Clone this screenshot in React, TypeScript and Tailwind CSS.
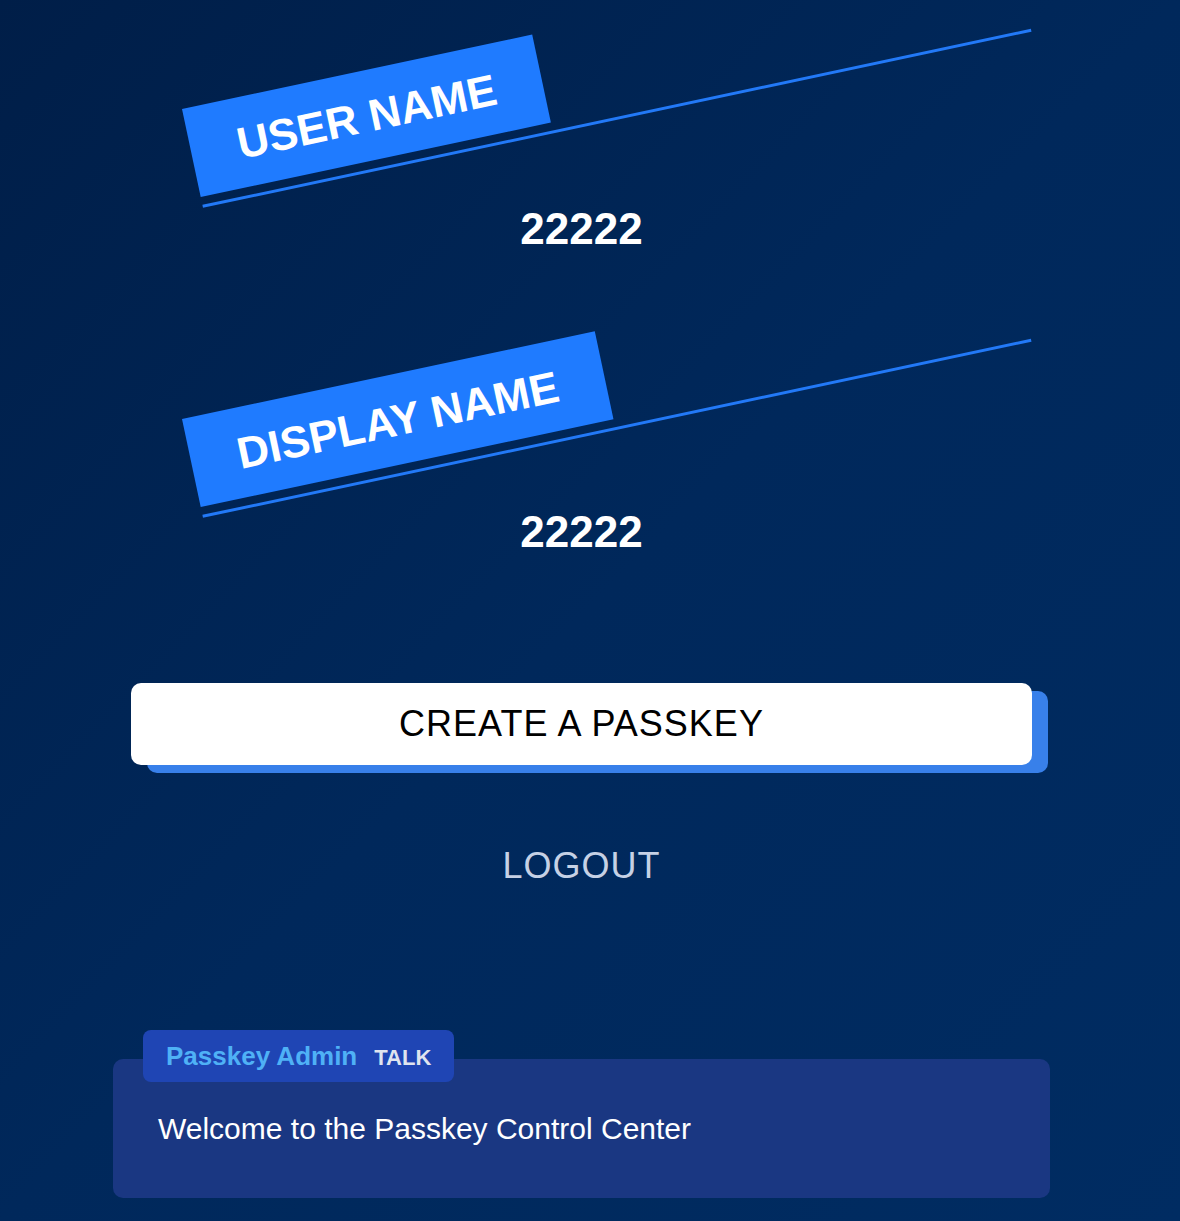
import React from 'react';

type FieldProps = {
  label: string;
  value: string;
  headClass: string;
  className?: string;
};

const Field = ({ label, value, headClass, className = '' }: FieldProps) => {
  return (
    <div className={className}>
      {/* slanted heading: label + long rule */}
      <div className={`${headClass} pl-[51px]`}>
        <div className="w-[847px] origin-top-left -rotate-12">
          <div className="w-fit h-[90px] px-[47px] flex items-center bg-[#1f7bff] text-white text-[44px] font-bold leading-[49px] whitespace-nowrap">
            {label}
          </div>
          <div className="mt-[8px] h-[3px] bg-[#2279f7]" />
        </div>
      </div>
      <div className="text-center text-white text-[44px] font-bold leading-[49px]">{value}</div>
    </div>
  );
};

const App = () => {
  return (
    <div className="min-h-screen w-full overflow-hidden bg-gradient-to-br from-[#001e48] via-[#00285b] to-[#002c62] font-['Liberation_Sans',Arial,sans-serif]">
      <div className="ml-[131px] w-[901px] pt-[109px] pb-[23px]">
        <Field label="USER NAME" value="22222" headClass="h-[95px]" />
        <Field label="DISPLAY NAME" value="22222" headClass="h-[88px]" className="mt-[166px]" />

        <button className="mt-[127px] w-full h-[82px] rounded-[10px] bg-white text-black text-[36px] leading-none tracking-[1px] shadow-[16px_8px_0_#3880ea]">
          CREATE A PASSKEY
        </button>

        <div className="mt-[81px] text-center text-[36px] leading-[40px] tracking-[1px] text-[#c6d1e5]">LOGOUT</div>

        {/* chat card */}
        <div className="mt-[144px] -mx-[18px]">
          <div className="relative z-10 ml-[30px] w-fit h-[52px] px-[23px] flex items-center rounded-[8px] bg-[#1f45b4]">
            <div className="flex items-baseline gap-[17px] font-bold leading-none">
              <span className="text-[26px] text-[#4fb1f6]">Passkey Admin</span>
              <span className="text-[22px] text-[#dfe4ef]">TALK</span>
            </div>
          </div>
          <div className="-mt-[23px] h-[139px] rounded-[10px] bg-[#1a3782] pl-[45px] flex items-center">
            <p className="text-[30px] leading-[34px] text-white">Welcome to the Passkey Control Center</p>
          </div>
        </div>
      </div>
    </div>
  );
};

export default App;
